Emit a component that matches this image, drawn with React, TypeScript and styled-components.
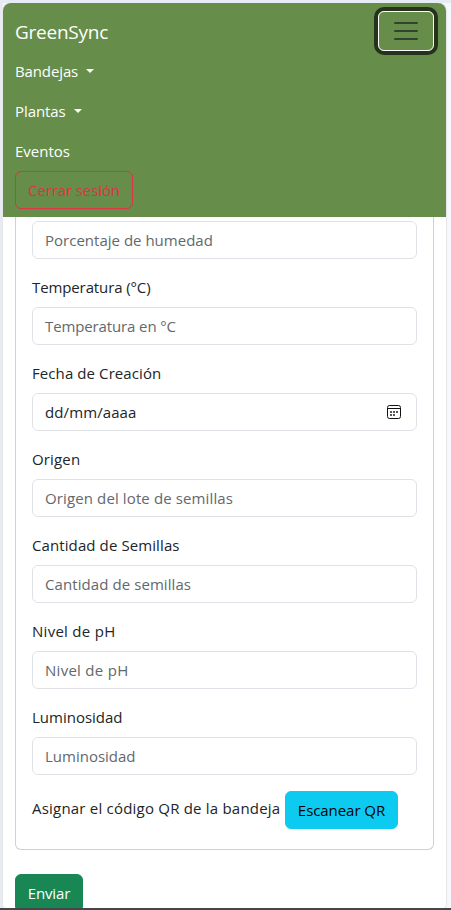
import React from "react";
import styled, { createGlobalStyle } from "styled-components";

const GlobalStyle = createGlobalStyle`
  *, *::before, *::after { box-sizing: border-box; }
  body {
    margin: 0;
    overflow: hidden;
    background: #f7f7fd;
    font-family: "Open Sans", "Noto Sans", sans-serif;
    font-size: 15px;
    line-height: 24px;
    color: #212529;
  }
`;

const Screen = styled.div`
  display: flex;
  flex-direction: column;
  height: 910px;
  overflow: hidden;
  background: linear-gradient(to right, #e7ebf4 3px, #f7f7fd 3px);
  border-top: 3px solid #e7ebf4;
  border-bottom: 2px solid #464648;
`;

const Page = styled.div`
  display: flex;
  flex-direction: column;
  flex: 1;
  min-height: 0;
  width: 443px;
  margin-left: 3px;
  overflow: hidden;
  background: #fff;
  border-radius: 8px 8px 4px 4px;
  box-shadow: 0 0 1px 1px #e6e6ea;
`;

const Navbar = styled.nav`
  flex: none;
  height: 214px;
  padding: 8px 12px;
  background: #668d49;
  color: #fff;
`;

const NavTop = styled.div`
  display: flex;
  justify-content: space-between;
  height: 40px;
`;

const Text = styled.span<{ $spacing?: number }>`
  letter-spacing: ${(p) => p.$spacing ?? 0}px;
  white-space: nowrap;
`;

const Brand = styled.div`
  font-size: 19px;
  line-height: 30px;
  padding-top: 6px;
`;

const Toggler = styled.button`
  display: flex;
  align-items: center;
  justify-content: center;
  width: 56px;
  height: 40px;
  padding: 0;
  background: transparent;
  border: 1px solid #fff;
  border-radius: 6px;
  box-shadow: 0 0 0 4px #26331c;
`;

const NavItem = styled.div`
  display: flex;
  align-items: center;
  height: 40px;
`;

const Caret = styled.span`
  margin-left: 8px;
  border-top: 4px solid #fff;
  border-left: 4px solid transparent;
  border-right: 4px solid transparent;
`;

const Button = styled.button<{ $bg: string; $fg: string; $line: string; $width: number }>`
  flex: none;
  width: ${(p) => p.$width}px;
  height: 38px;
  padding: 0;
  border: 1px solid ${(p) => p.$line};
  border-radius: 6px;
  background: ${(p) => p.$bg};
  color: ${(p) => p.$fg};
  font: inherit;
`;

const Card = styled.section`
  flex: none;
  width: 419px;
  height: 633px;
  margin: 0 0 24px 12px;
  padding: 4px 16px 0;
  border: 1px solid #cfd0d2;
  border-top: 0;
  border-radius: 0 0 6px 6px;
`;

const Label = styled.label`
  display: block;
  margin-bottom: 8px;
`;

const Control = styled.div<{ $filled?: boolean }>`
  display: flex;
  align-items: center;
  justify-content: space-between;
  height: 38px;
  margin-bottom: 16px;
  padding: 0 15px 0 12px;
  border: 1px solid #dee2e6;
  border-radius: 6px;
  color: ${(p) => (p.$filled ? "#212529" : "#63686d")};
`;

const QrRow = styled.div`
  display: flex;
  align-items: center;
  justify-content: space-between;
  width: 366px;
`;

const QrLabel = styled.span`
  margin-top: -4px;
`;

const Submit = styled.div`
  display: flex;
  margin-left: 12px;
`;

function CalendarIcon() {
  return (
    <svg width="14" height="14" viewBox="0 0 14 14" fill="none">
      <rect x="0.5" y="0.5" width="13" height="13" rx="2" stroke="#111" />
      <path d="M0.5 3.5H13.5" stroke="#111" />
      <path
        d="M3 7h2M6 7h2M9 7h2M3 10h2M6 10h2"
        stroke="#222"
        strokeWidth="1.7"
      />
    </svg>
  );
}

interface Field {
  label?: string;
  labelSpacing?: number;
  hint: string;
  hintSpacing: number;
  date?: boolean;
}

const fields: Field[] = [
  { hint: "Porcentaje de humedad", hintSpacing: 0.01 },
  { label: "Temperatura (°C)", labelSpacing: -0.11, hint: "Temperatura en °C", hintSpacing: -0.12 },
  { label: "Fecha de Creación", labelSpacing: 0.09, hint: "dd/mm/aaaa", hintSpacing: 0.1, date: true },
  { label: "Origen", labelSpacing: 0.15, hint: "Origen del lote de semillas", hintSpacing: 0.12 },
  { label: "Cantidad de Semillas", labelSpacing: 0.1, hint: "Cantidad de semillas", hintSpacing: 0.08 },
  { label: "Nivel de pH", labelSpacing: 0.28, hint: "Nivel de pH", hintSpacing: 0.28 },
  { label: "Luminosidad", labelSpacing: 0, hint: "Luminosidad", hintSpacing: 0 },
];

export default function App() {
  return (
    <Screen>
      <GlobalStyle />
      <Page>
        <Navbar>
          <NavTop>
            <Brand><Text $spacing={-0.25}>GreenSync</Text></Brand>
            <Toggler aria-label="Menú">
              <svg width="24" height="20" viewBox="0 0 24 20">
                <path d="M1 2H23M1 10H23M1 18H23" stroke="#34432f" strokeWidth="2" strokeLinecap="round" />
              </svg>
            </Toggler>
          </NavTop>
          <NavItem><Text $spacing={-0.12}>Bandejas</Text><Caret /></NavItem>
          <NavItem><Text $spacing={-0.08}>Plantas</Text><Caret /></NavItem>
          <NavItem><Text>Eventos</Text></NavItem>
          <Button $bg="transparent" $fg="#dc3545" $line="#dc3545" $width={118}>
            <Text $spacing={-0.1}>Cerrar sesión</Text>
          </Button>
        </Navbar>
        <Card>
          {fields.map((f) => (
            <React.Fragment key={f.hint}>
              {f.label && <Label><Text $spacing={f.labelSpacing}>{f.label}</Text></Label>}
              <Control $filled={f.date}>
                <Text $spacing={f.hintSpacing}>{f.hint}</Text>
                {f.date && <CalendarIcon />}
              </Control>
            </React.Fragment>
          ))}
          <QrRow>
            <QrLabel><Text $spacing={0.21}>Asignar el código QR de la bandeja</Text></QrLabel>
            <Button $bg="#0dcaf0" $fg="#000" $line="#0dcaf0" $width={113}>
              <Text $spacing={-0.06}>Escanear QR</Text>
            </Button>
          </QrRow>
        </Card>
        <Submit>
          <Button $bg="#198754" $fg="#fff" $line="#198754" $width={68}>
            <Text $spacing={-0.15}>Enviar</Text>
          </Button>
        </Submit>
      </Page>
    </Screen>
  );
}
